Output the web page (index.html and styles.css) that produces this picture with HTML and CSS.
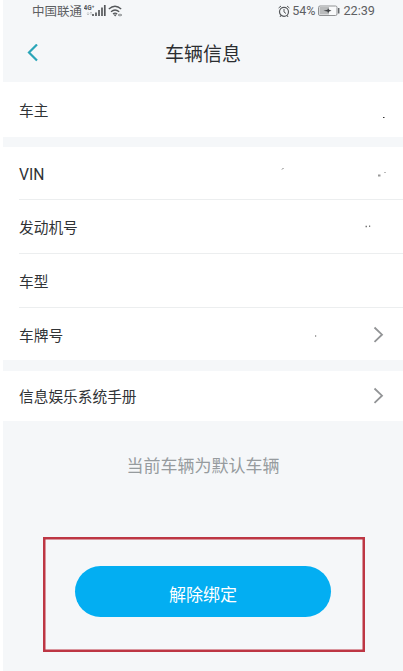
FILE: index.html
```html
<!DOCTYPE html>
<html lang="zh-CN">
<head>
<meta charset="utf-8">
<title>车辆信息</title>
<link rel="stylesheet" href="styles.css">
</head>
<body>
<main class="screen">
  <div class="status">
    <span class="carrier">中国联通</span>
    <svg class="signal" width="40" height="16" viewBox="0 0 40 16">
      <text x="-.5" y="6.500" class="net">4G⁺</text>
      <path d="M4 9v3M2.800 10.800L4 12l1.200-1.200M7 12V9M5.900 10.200L7 9l1.100 1.200" fill="none" stroke="#b5b7b9" stroke-width=".7"/>
      <path d="M9 13v-2M12 13V9.500M15 13V7M18 13V4.500M20.800 13V2" stroke="#55585b" stroke-width="1.700" fill="none"/>
      <path d="M24.800 6q6.200-5.500 12.400 0M27 8.700q4-3.400 8.200 0M29 11q2-1.700 4.200 0" fill="none" stroke="#55585b" stroke-width="1.300"/>
      <path d="M29.500 11.500h3.300L31.200 13.500zM34 12l1.500-1.500v3zM38 12l-1.500-1.500v3z" fill="#55585b"/>
    </svg>
    <span class="grow"></span>
    <svg class="alarm" width="12" height="13" viewBox="0 0 12 13">
      <g fill="none" stroke="#56595c"><circle cx="6" cy="6.800" r="4.500" stroke-width="1.200"/><path d="M6 4v3l2 1.500M.6 3L3 1M11.400 3L9 1M3 10.300L2 12M9 10.300l1 1.700"/></g>
    </svg>
    <span class="percent">54%</span>
    <svg class="battery" width="22" height="12" viewBox="0 0 22 12">
      <rect x=".5" y="1" width="18.500" height="9.500" rx="1.500" fill="#f9fafb" stroke="#909294"/>
      <path d="M1.500 2H11v7.500H1.500z" fill="#b9bbbc"/>
      <path d="M5.500 5.800l4-1 .5-1.600 1.200 1.600 2.300 1-2.300.8L10 8.200l-.5-1.600z" fill="#3f4245"/>
      <path d="M20.700 3v5.500" stroke="#66696c" stroke-width="1.500"/>
    </svg>
    <span class="time">22:39</span>
  </div>
  <header class="bar">
    <svg class="back" width="12" height="18" viewBox="0 0 12 18"><path d="M10 .5L2 8.500l8 8" fill="none" stroke="#2aa5b8" stroke-width="2.200"/></svg>
    <h1>车辆信息</h1>
  </header>
  <section class="group owner">
    <div class="row"><span>车主</span>
      <svg class="trace" width="130" height="20"><path d="M110 17.500h1.500" stroke="#333" stroke-width="1.200"/></svg></div>
  </section>
  <section class="group details">
    <div class="row"><span class="latin">VIN</span>
      <svg class="trace" width="130" height="20"><path d="M9 6.500l1.500-1.500" stroke="#777"/><path d="M105 12.500h2.500" stroke="#999" stroke-width="2"/><path d="M111 9.500h2" stroke="#bbb"/></svg></div>
    <div class="row"><span>发动机号</span>
      <svg class="trace" width="130" height="20"><path d="M92.500 10.500h1.500M96 10.200h1.200" stroke="#777" stroke-width="1.600"/></svg></div>
    <div class="row"><span>车型</span></div>
    <div class="row"><span>车牌号</span>
      <svg class="trace" width="130" height="20"><path d="M42 12h1.200" stroke="#888" stroke-width="1.300"/><path d="M101.500 3.500l7.500 7.200-7.500 7.200" fill="none" stroke="#929496" stroke-width="1.800"/></svg></div>
  </section>
  <section class="group manual">
    <div class="row"><span>信息娱乐系统手册</span>
      <svg class="trace" width="130" height="20"><path d="M101.500 2.500l7.500 7.200-7.500 7.200" fill="none" stroke="#929496" stroke-width="1.800"/></svg></div>
  </section>
  <p class="note">当前车辆为默认车辆</p>
  <div class="highlight"><button class="unbind">解除绑定</button></div>
</main>
</body>
</html>
```
FILE: styles.css
```css
* { box-sizing: border-box; }
body {
  margin: 0;
  background: #fff;
  font-family: Roboto, "Noto Sans CJK SC", sans-serif;
  color: #303336;
}
.screen {
  height: 671px;
  margin-left: 3px;
  background: #f5f7f9;
  overflow: hidden;
}
.status {
  display: flex;
  align-items: center;
  height: 22px;
  padding: 0 28px 0 29px;
  font-size: 12.500px;
  line-height: 22px;
  color: #5d6063;
  white-space: nowrap;
}
.carrier { padding-top: 1px; }
.signal { margin-left: 2px; }
.net { font: bold 6.500px Roboto, sans-serif; fill: #55585b; }
.grow { flex: 1; }
.percent { margin-left: 2px; font-size: 12.500px; }
.battery { margin: 0 3px; }
.time { font-size: 12.700px; }
.bar {
  display: grid;
  grid-template-columns: 40px 1fr 40px;
  align-items: center;
  height: 60px;
}
.back { margin: 1px 0 0 24px; }
.bar h1 {
  margin: 6px 0 0;
  font-size: 19px;
  font-weight: 400;
  line-height: 28px;
  text-align: center;
  color: #2b2e31;
}
.group { background: #fff; }
.owner { height: 55px; margin-bottom: 10px; }
.manual { height: 50px; margin-top: 11px; }
.row {
  display: flex;
  align-items: center;
  justify-content: space-between;
  height: 100%;
  padding-left: 16px;
  font-size: 14.700px;
  line-height: 22px;
}
.row span { padding-top: 2px; }
.details {
  display: grid;
  grid-template-rows: 52px 54px 54px 53px;
}
.details .row span { padding-top: 4px; }
.details .row .latin { padding-top: 3px; font-size: 15.700px; }
.details .row + .row { box-shadow: inset 16px 0 #fff, inset 0 1px #eceeef; }
.trace { flex: none; }
.note {
  margin: 33px 0 0;
  font-size: 17px;
  line-height: 24px;
  text-align: center;
  color: #969b9e;
}
.highlight {
  display: flex;
  align-items: center;
  justify-content: center;
  width: 322px;
  height: 115px;
  margin: 59px 0 0 40px;
  padding-right: 2px;
  padding-bottom: 6px;
  border: 2px solid #bd3644;
  box-shadow: inset 0 0 0 .5px #bd3644;
}
.unbind {
  width: 256px;
  height: 51px;
  padding: 6px 0 0;
  border: 0;
  border-radius: 26px;
  background: #03aef2;
  color: #fff;
  font: 17px/24px Roboto, "Noto Sans CJK SC", sans-serif;
}
```
